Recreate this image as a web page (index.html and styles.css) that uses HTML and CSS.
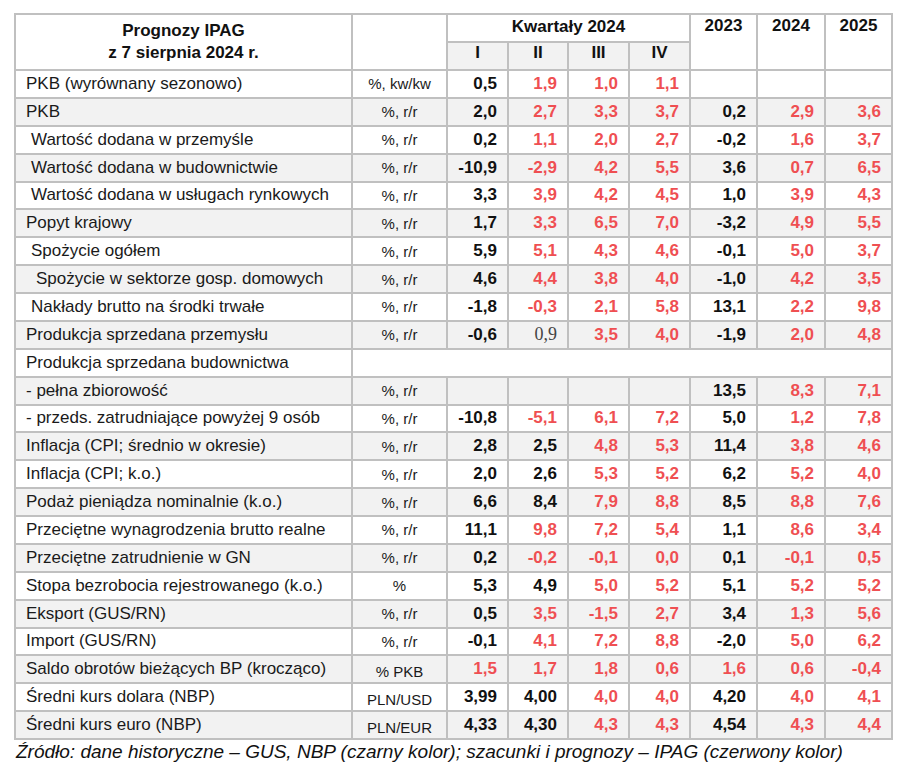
FILE: index.html
```html
<!DOCTYPE html>
<html lang="pl">
<head>
<meta charset="utf-8">
<title>Prognozy IPAG</title>
<link rel="stylesheet" href="styles.css">
</head>
<body>
<div class="wrap">
<table class="fc">
<colgroup>
<col class="c-label"><col class="c-unit"><col class="c-q"><col class="c-q2"><col class="c-q"><col class="c-q"><col class="c-y"><col class="c-y2"><col class="c-y">
</colgroup>
<thead>
<tr class="h1">
<th rowspan="2" class="title">Prognozy IPAG<br>z 7 sierpnia 2024 r.</th>
<th rowspan="2"></th>
<th colspan="4" class="kw">Kwartały 2024</th>
<th rowspan="2" class="yr">2023</th>
<th rowspan="2" class="yr">2024</th>
<th rowspan="2" class="yr">2025</th>
</tr>
<tr class="h2">
<th class="rom">I</th><th class="rom">II</th><th class="rom">III</th><th class="rom">IV</th>
</tr>
</thead>
<tbody>
<tr><td class="lab">PKB (wyrównany sezonowo)</td><td class="u">%, kw/kw</td><td class="n">0,5</td><td class="n r">1,9</td><td class="n r">1,0</td><td class="n r">1,1</td><td></td><td></td><td></td></tr>
<tr><td class="lab">PKB</td><td class="u">%, r/r</td><td class="n">2,0</td><td class="n r">2,7</td><td class="n r">3,3</td><td class="n r">3,7</td><td class="n">0,2</td><td class="n r">2,9</td><td class="n r">3,6</td></tr>
<tr><td class="lab i1">Wartość dodana w przemyśle</td><td class="u">%, r/r</td><td class="n">0,2</td><td class="n r">1,1</td><td class="n r">2,0</td><td class="n r">2,7</td><td class="n">-0,2</td><td class="n r">1,6</td><td class="n r">3,7</td></tr>
<tr><td class="lab i1">Wartość dodana w budownictwie</td><td class="u">%, r/r</td><td class="n">-10,9</td><td class="n r">-2,9</td><td class="n r">4,2</td><td class="n r">5,5</td><td class="n">3,6</td><td class="n r">0,7</td><td class="n r">6,5</td></tr>
<tr><td class="lab i1">Wartość dodana w usługach rynkowych</td><td class="u">%, r/r</td><td class="n">3,3</td><td class="n r">3,9</td><td class="n r">4,2</td><td class="n r">4,5</td><td class="n">1,0</td><td class="n r">3,9</td><td class="n r">4,3</td></tr>
<tr><td class="lab">Popyt krajowy</td><td class="u">%, r/r</td><td class="n">1,7</td><td class="n r">3,3</td><td class="n r">6,5</td><td class="n r">7,0</td><td class="n">-3,2</td><td class="n r">4,9</td><td class="n r">5,5</td></tr>
<tr><td class="lab i1">Spożycie ogółem</td><td class="u">%, r/r</td><td class="n">5,9</td><td class="n r">5,1</td><td class="n r">4,3</td><td class="n r">4,6</td><td class="n">-0,1</td><td class="n r">5,0</td><td class="n r">3,7</td></tr>
<tr><td class="lab i2">Spożycie w sektorze gosp. domowych</td><td class="u">%, r/r</td><td class="n">4,6</td><td class="n r">4,4</td><td class="n r">3,8</td><td class="n r">4,0</td><td class="n">-1,0</td><td class="n r">4,2</td><td class="n r">3,5</td></tr>
<tr><td class="lab i1">Nakłady brutto na środki trwałe</td><td class="u">%, r/r</td><td class="n">-1,8</td><td class="n r">-0,3</td><td class="n r">2,1</td><td class="n r">5,8</td><td class="n">13,1</td><td class="n r">2,2</td><td class="n r">9,8</td></tr>
<tr><td class="lab">Produkcja sprzedana przemysłu</td><td class="u">%, r/r</td><td class="n">-0,6</td><td class="n serif">0,9</td><td class="n r">3,5</td><td class="n r">4,0</td><td class="n">-1,9</td><td class="n r">2,0</td><td class="n r">4,8</td></tr>
<tr><td class="lab">Produkcja sprzedana budownictwa</td><td colspan="8"></td></tr>
<tr><td class="lab">- pełna zbiorowość</td><td class="u">%, r/r</td><td></td><td></td><td></td><td></td><td class="n">13,5</td><td class="n r">8,3</td><td class="n r">7,1</td></tr>
<tr><td class="lab">- przeds. zatrudniające powyżej 9 osób</td><td class="u">%, r/r</td><td class="n">-10,8</td><td class="n r">-5,1</td><td class="n r">6,1</td><td class="n r">7,2</td><td class="n">5,0</td><td class="n r">1,2</td><td class="n r">7,8</td></tr>
<tr><td class="lab">Inflacja (CPI; średnio w okresie)</td><td class="u">%, r/r</td><td class="n">2,8</td><td class="n">2,5</td><td class="n r">4,8</td><td class="n r">5,3</td><td class="n">11,4</td><td class="n r">3,8</td><td class="n r">4,6</td></tr>
<tr><td class="lab">Inflacja (CPI; k.o.)</td><td class="u">%, r/r</td><td class="n">2,0</td><td class="n">2,6</td><td class="n r">5,3</td><td class="n r">5,2</td><td class="n">6,2</td><td class="n r">5,2</td><td class="n r">4,0</td></tr>
<tr><td class="lab">Podaż pieniądza nominalnie (k.o.)</td><td class="u">%, r/r</td><td class="n">6,6</td><td class="n">8,4</td><td class="n r">7,9</td><td class="n r">8,8</td><td class="n">8,5</td><td class="n r">8,8</td><td class="n r">7,6</td></tr>
<tr><td class="lab">Przeciętne wynagrodzenia brutto realne</td><td class="u">%, r/r</td><td class="n">11,1</td><td class="n r">9,8</td><td class="n r">7,2</td><td class="n r">5,4</td><td class="n">1,1</td><td class="n r">8,6</td><td class="n r">3,4</td></tr>
<tr><td class="lab">Przeciętne zatrudnienie w GN</td><td class="u">%, r/r</td><td class="n">0,2</td><td class="n r">-0,2</td><td class="n r">-0,1</td><td class="n r">0,0</td><td class="n">0,1</td><td class="n r">-0,1</td><td class="n r">0,5</td></tr>
<tr><td class="lab">Stopa bezrobocia rejestrowanego (k.o.)</td><td class="u">%</td><td class="n">5,3</td><td class="n">4,9</td><td class="n r">5,0</td><td class="n r">5,2</td><td class="n">5,1</td><td class="n r">5,2</td><td class="n r">5,2</td></tr>
<tr><td class="lab">Eksport (GUS/RN)</td><td class="u">%, r/r</td><td class="n">0,5</td><td class="n r">3,5</td><td class="n r">-1,5</td><td class="n r">2,7</td><td class="n">3,4</td><td class="n r">1,3</td><td class="n r">5,6</td></tr>
<tr><td class="lab">Import (GUS/RN)</td><td class="u">%, r/r</td><td class="n">-0,1</td><td class="n r">4,1</td><td class="n r">7,2</td><td class="n r">8,8</td><td class="n">-2,0</td><td class="n r">5,0</td><td class="n r">6,2</td></tr>
<tr><td class="lab">Saldo obrotów bieżących BP (krocząco)</td><td class="u low">% PKB</td><td class="n r">1,5</td><td class="n r">1,7</td><td class="n r">1,8</td><td class="n r">0,6</td><td class="n r">1,6</td><td class="n r">0,6</td><td class="n r">-0,4</td></tr>
<tr><td class="lab">Średni kurs dolara (NBP)</td><td class="u low">PLN/USD</td><td class="n">3,99</td><td class="n">4,00</td><td class="n r">4,0</td><td class="n r">4,0</td><td class="n">4,20</td><td class="n r">4,0</td><td class="n r">4,1</td></tr>
<tr><td class="lab">Średni kurs euro (NBP)</td><td class="u low">PLN/EUR</td><td class="n">4,33</td><td class="n">4,30</td><td class="n r">4,3</td><td class="n r">4,3</td><td class="n">4,54</td><td class="n r">4,3</td><td class="n r">4,4</td></tr>
</tbody>
</table>
<p class="src">Źródło: dane historyczne – GUS, NBP (czarny kolor); szacunki i prognozy – IPAG (czerwony kolor)</p>
</div>
</body>
</html>
```
FILE: styles.css
```css
html, body {
  margin: 0;
  padding: 0;
  background: #ffffff;
}
body {
  font-family: "Liberation Sans", Arial, sans-serif;
  color: #111;
}
.wrap {
  padding: 13px 0 0 14px;
}
.fc {
  border-collapse: collapse;
  table-layout: fixed;
  width: 879px;
  border: 2px solid #c0c0c0;
}
.c-label { width: 337px; }
.c-unit { width: 95px; }
.c-q { width: 61px; }
.c-q2 { width: 60px; }
.c-y { width: 67px; }
.c-y2 { width: 68px; }
.fc th, .fc td {
  border: 2px solid #c0c0c0;
  padding: 0;
}
.fc th {
  font-weight: bold;
  font-size: 17px;
  color: #111;
}
.h1 { height: 27.5px; }
.h2 { height: 28.5px; }
.fc .title {
  line-height: 22px;
  vertical-align: middle;
  text-align: center;
}
.fc .kw {
  text-align: center;
  vertical-align: middle;
  padding-bottom: 1px;
}
.fc .yr {
  vertical-align: top;
  text-align: center;
  padding-top: 1px;
}
.fc .rom {
  background: #f2f2f2;
  text-align: center;
  vertical-align: middle;
  padding-bottom: 5px;
}
.fc tbody tr {
  height: 27.875px;
}
.fc tbody tr:nth-child(even) td {
  background: #f2f2f2;
}
.fc .lab {
  font-size: 17px;
  padding-left: 10px;
  white-space: nowrap;
  color: #1a1a1a;
}
.fc .lab.i1 { padding-left: 15px; }
.fc .lab.i2 { padding-left: 20px; }
.fc .u {
  font-size: 15px;
  text-align: center;
  color: #1a1a1a;
}
.fc .u.low {
  padding-top: 5px;
}
.fc .n {
  font-size: 17px;
  font-weight: bold;
  text-align: right;
  padding-right: 10px;
  color: #111;
}
.fc .n.r {
  color: #ef4f52;
}
.fc .n.serif {
  font-family: "Liberation Serif", "Times New Roman", serif;
  font-weight: normal;
  font-size: 18px;
  color: #444;
}
.src {
  margin: 1px 0 0 2px;
  font-size: 19px;
  font-style: italic;
  color: #111;
}
```
